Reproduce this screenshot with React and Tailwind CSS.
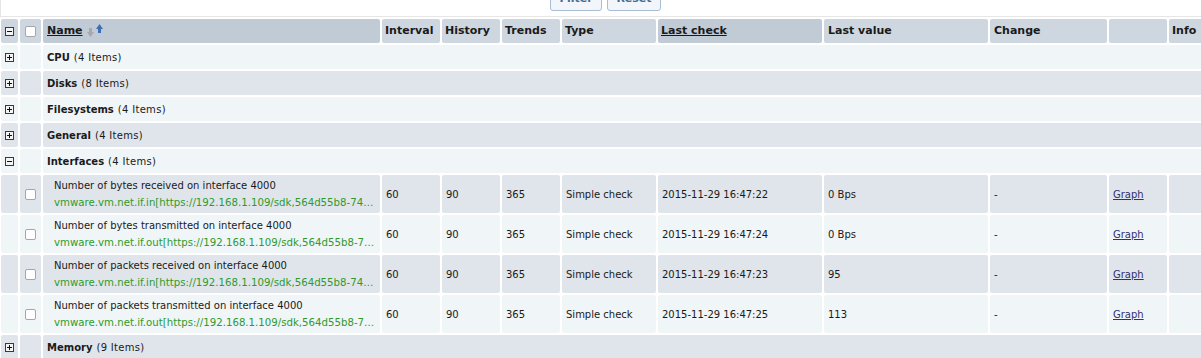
import React from 'react';

const cols = 'grid-cols-[17px_21px_337px_58px_58px_58px_94px_164px_164px_117px_58px_60px]';

const light = 'bg-[#f0f5f8]';
const dark = 'bg-[#e0e5ec]';

const ToggleBox = ({ open }) => (
  <svg width="9" height="9" viewBox="0 0 9 9">
    <rect x="0.5" y="0.5" width="8" height="8" fill="#f4f4f4" stroke="#3a3a3a" />
    <line x1="2" y1="4.5" x2="7" y2="4.5" stroke="#111" strokeWidth="1" />
    {!open && <line x1="4.5" y1="2" x2="4.5" y2="7" stroke="#111" strokeWidth="1" />}
  </svg>
);

const Check = () => (
  <span className="block w-[11px] h-[11px] rounded-[2px] border border-[#a6a6a6] bg-white" />
);

const SortIcon = () => (
  <svg width="17" height="14" viewBox="0 0 17 14" className="inline-block ml-[4px] self-start mt-[5px]">
    <path d="M3.5 4 L3.5 9" stroke="#a9a9a9" strokeWidth="3" />
    <path d="M0 8 L7 8 L3.5 13 Z" fill="#a9a9a9" />
    <path d="M12.5 4 L12.5 9" stroke="#3f6fb3" strokeWidth="3" />
    <path d="M9 5 L16 5 L12.5 0 Z" fill="#3f6fb3" />
  </svg>
);

const groups1 = [
  ['CPU', 4],
  ['Disks', 8],
  ['Filesystems', 4],
  ['General', 4],
];

const items = [
  ['Number of bytes received on interface 4000', 'vmware.vm.net.if.in[https://192.168.1.109/sdk,564d55b8-74…', '2015-11-29 16:47:22', '0 Bps'],
  ['Number of bytes transmitted on interface 4000', 'vmware.vm.net.if.out[https://192.168.1.109/sdk,564d55b8-7…', '2015-11-29 16:47:24', '0 Bps'],
  ['Number of packets received on interface 4000', 'vmware.vm.net.if.in[https://192.168.1.109/sdk,564d55b8-74…', '2015-11-29 16:47:23', '95'],
  ['Number of packets transmitted on interface 4000', 'vmware.vm.net.if.out[https://192.168.1.109/sdk,564d55b8-7…', '2015-11-29 16:47:25', '113'],
];

const GroupRow = ({ name, count, bg, open }) => (
  <>
    <div className={`${bg} rounded-[2px] h-[24px] flex items-center justify-center`}><ToggleBox open={open} /></div>
    <div className={`${bg} rounded-[2px]`} />
    <div className={`${bg} rounded-[2px] col-span-10 flex items-center pl-[4px] text-[#1a1a1a]`}>
      <span className="font-bold">{name}</span>
      <span className="ml-[4px] tracking-[0.3px]">({count} Items)</span>
    </div>
  </>
);

const Cell = ({ bg, children, className = '' }) => (
  <div className={`${bg} rounded-[2px] flex items-center pl-[4px] ${className}`}>{children}</div>
);

const Head = ({ bg = 'bg-[#ced6df]', children, pl = 'pl-[3px]' }) => (
  <div className={`${bg} rounded-[2px] flex items-center ${pl} font-bold text-[11px]`}>{children}</div>
);

export default function App() {
  return (
    <div className="w-[1201px] h-[358px] overflow-hidden bg-white text-[10px] text-[#1a1a1a] font-['DejaVu_Sans',Verdana,sans-serif]">
      <div className="h-[17px] border-b border-l border-[#e6e6e6] relative">
        <div className="absolute left-[549px] top-[-12px] flex gap-[5px]">
          <span className="w-[52px] h-[23px] rounded-[3px] border border-[#a9bdd3] bg-[#f2f6fa] text-[#4a6a92] font-bold text-[11px] flex items-center justify-center">Filter</span>
          <span className="w-[54px] h-[23px] rounded-[3px] border border-[#a9bdd3] bg-[#f2f6fa] text-[#4a6a92] font-bold text-[11px] flex items-center justify-center">Reset</span>
        </div>
      </div>
      <div className={`grid ${cols} gap-[2px] ml-[1px] mt-[2px] auto-rows-min`}>
        {/* header */}
        <div className="bg-[#ced6df] rounded-[2px] h-[24px] flex items-center justify-center"><ToggleBox open /></div>
        <div className="bg-[#ced6df] rounded-[2px] flex items-center justify-center"><Check /></div>
        <Head bg="bg-[#c0cbd5]" pl="pl-[4px]">
          <span className="underline">Name</span><SortIcon />
        </Head>
        <Head>Interval</Head>
        <Head>History</Head>
        <Head>Trends</Head>
        <Head>Type</Head>
        <Head bg="bg-[#c0cbd5]"><span className="underline">Last check</span></Head>
        <Head pl="pl-[4px]">Last value</Head>
        <Head pl="pl-[4px]">Change</Head>
        <div className="bg-[#ced6df] rounded-[2px]" />
        <Head>Info</Head>

        {groups1.map(([n, c], i) => (
          <GroupRow key={n} name={n} count={c} bg={i % 2 === 0 ? light : dark} />
        ))}
        <GroupRow name="Interfaces" count={4} bg={light} open />

        {items.map(([name, key, time, val], i) => {
          const bg = i % 2 === 0 ? dark : light;
          return (
            <React.Fragment key={name}>
              <div className={`${bg} rounded-[2px] h-[38px]`} />
              <div className={`${bg} rounded-[2px] flex items-center justify-center`}><Check /></div>
              <div className={`${bg} rounded-[2px] pl-[11px] pr-[2px] pt-[2px] leading-[17px] min-w-0`}>
                <div className="whitespace-nowrap">{name}</div>
                <div className="whitespace-nowrap text-[10.2px] text-[#2f9a2b]">{key}</div>
              </div>
              <Cell bg={bg}>60</Cell>
              <Cell bg={bg}>90</Cell>
              <Cell bg={bg}>365</Cell>
              <Cell bg={bg}>Simple check</Cell>
              <Cell bg={bg}>{time}</Cell>
              <Cell bg={bg}>{val}</Cell>
              <Cell bg={bg}>-</Cell>
              <Cell bg={bg}><span className="underline text-[#33306e]">Graph</span></Cell>
              <Cell bg={bg} />
            </React.Fragment>
          );
        })}

        <GroupRow name="Memory" count={9} bg={dark} />
      </div>
    </div>
  );
}
